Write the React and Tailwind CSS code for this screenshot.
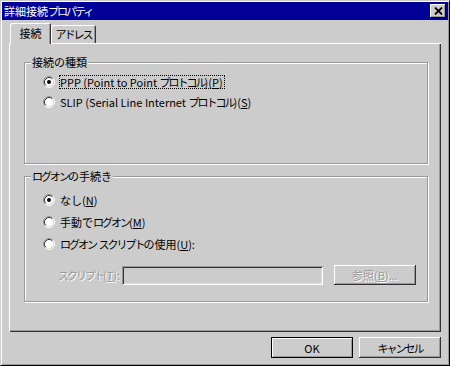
import React from 'react';

const kana = /([\u30A0-\u30FF]+)/;

// katakana in the old bitmap font is narrow, so squeeze those runs
function Jp({ t }) {
  return t.split(kana).map((s, i) =>
    i % 2 ? <span key={i} className="tracking-[-2px]">{s}</span> : s
  );
}

function Key({ k }) {
  return <span className="underline underline-offset-[1px]">{k}</span>;
}

function Radio({ checked }) {
  return (
    <svg width="12" height="12" viewBox="0 0 12 12" className="shrink-0">
      <circle cx="6" cy="6" r="4.5" fill="#fff" />
      <path d="M2.11 9.89 A5.5 5.5 0 0 1 9.89 2.11" fill="none" stroke="#999" />
      <path d="M9.89 2.11 A5.5 5.5 0 0 1 2.11 9.89" fill="none" stroke="#fff" />
      <path d="M2.82 9.18 A4.5 4.5 0 0 1 9.18 2.82" fill="none" stroke="#333" />
      <path d="M9.18 2.82 A4.5 4.5 0 0 1 2.82 9.18" fill="none" stroke="#ddd" />
      {checked && <circle cx="6" cy="6" r="2" fill="#000" />}
    </svg>
  );
}

function Option({ checked, focused, children }) {
  return (
    <div className="flex items-center gap-[4px] h-[14px]">
      <Radio checked={checked} />
      <span
        className={`border pr-[1px] leading-[12px] whitespace-nowrap ${
          focused ? 'border-dotted border-black' : 'border-transparent'
        }`}
      >
        {children}
      </span>
    </div>
  );
}

function Group({ label, className, children }) {
  return (
    <div
      className={`relative w-[404px] border border-[#999] shadow-[inset_1px_1px_#fff,1px_1px_#fff] ${className}`}
    >
      <span className="absolute left-[6px] top-[-8px] px-[1px] bg-[#cccccc] leading-[14px]">
        <Jp t={label} />
      </span>
      {children}
    </div>
  );
}

export default function App() {
  return (
    <div className="w-[450px] h-[366px] bg-[#cccccc] text-black text-[11px] leading-[14px] font-['Noto_Sans_CJK_JP',sans-serif] border border-t-[#cccccc] border-l-[#cccccc] border-r-black border-b-black shadow-[inset_1px_1px_#fff,inset_-1px_-1px_#999] p-[1px] flex flex-col">
      {/* Title bar */}
      <div className="h-[18px] bg-[#000099] flex items-center justify-between pl-[2px] pr-[2px]">
        <span className="text-white">
          <Jp t="詳細接続プロパティ" />
        </span>
        <button className="w-[16px] h-[14px] bg-[#cccccc] shadow-[inset_-1px_-1px_#000,inset_1px_1px_#fff,inset_-2px_-2px_#999] flex items-center justify-center">
          <svg width="9" height="8" viewBox="0 0 9 8">
            <path d="M1 0.5 L8 7.5 M8 0.5 L1 7.5" stroke="#000" strokeWidth="1.8" />
          </svg>
        </button>
      </div>

      <div className="flex flex-col px-[7px] pt-[3px]">
        {/* Tabs */}
        <div className="flex items-end h-[20px] pl-[1px]">
          <div className="relative z-10 w-[41px] h-[21px] -mb-[1px] bg-[#cccccc] rounded-t-[2px] shadow-[inset_1px_1px_#fff,inset_-1px_0_#333,inset_-2px_0_#999] flex items-center justify-center pb-[1px]">
            接続
          </div>
          <div className="w-[45px] h-[18px] bg-[#cccccc] rounded-t-[2px] shadow-[inset_1px_1px_#fff,inset_-1px_0_#333,inset_-2px_0_#999] flex items-center justify-center">
            <Jp t="アドレス" />
          </div>
        </div>

        {/* Tab panel */}
        <div className="h-[289px] shadow-[inset_1px_1px_#fff,inset_-1px_-1px_#333,inset_-2px_-2px_#999] pl-[15px] pt-[19px]">
          <Group label="接続の種類" className="h-[102px] pl-[18px] pt-[12px]">
            <div className="flex flex-col gap-[6px]">
              <Option checked focused>
                <Jp t="PPP (Point to Point プロトコル)(" />
                <Key k="P" />)
              </Option>
              <Option>
                <Jp t="SLIP (Serial Line Internet プロトコル)(" />
                <Key k="S" />)
              </Option>
            </div>
          </Group>

          <Group label="ログオンの手続き" className="mt-[12px] h-[126px] pl-[18px] pt-[16px]">
            <div className="flex flex-col gap-[8px]">
              <Option checked>
                なし(<Key k="N" />)
              </Option>
              <Option>
                <Jp t="手動でログオン(" />
                <Key k="M" />)
              </Option>
              <Option>
                <Jp t="ログオン スクリプトの使用(" />
                <Key k="U" />):
              </Option>
              <div className="flex items-center ml-[15px] mt-[6px]">
                <span className="w-[64px] text-[#999] [text-shadow:1px_1px_0_#fff] whitespace-nowrap">
                  <Jp t="スクリプト(" />
                  <Key k="T" />):
                </span>
                <div className="w-[201px] h-[19px] bg-[#cccccc] shadow-[inset_1px_1px_#999,inset_-1px_-1px_#fff,inset_2px_2px_#333,inset_-2px_-2px_#ddd]" />
                <button className="ml-[11px] w-[82px] h-[20px] bg-[#cccccc] shadow-[inset_-1px_-1px_#333,inset_1px_1px_#fff,inset_-2px_-2px_#999] text-[#999] [text-shadow:1px_1px_0_#fff]">
                  参照(<Key k="B" />)...
                </button>
              </div>
            </div>
          </Group>
        </div>

        {/* Dialog buttons */}
        <div className="flex justify-end gap-[6px] mt-[5px]">
          <button className="w-[82px] h-[21px] bg-[#cccccc] border border-black shadow-[inset_1px_1px_#fff,inset_-1px_-1px_#999]">
            OK
          </button>
          <button className="w-[82px] h-[21px] bg-[#cccccc] shadow-[inset_-1px_-1px_#333,inset_1px_1px_#fff,inset_-2px_-2px_#999]">
            <Jp t="キャンセル" />
          </button>
        </div>
      </div>
    </div>
  );
}
